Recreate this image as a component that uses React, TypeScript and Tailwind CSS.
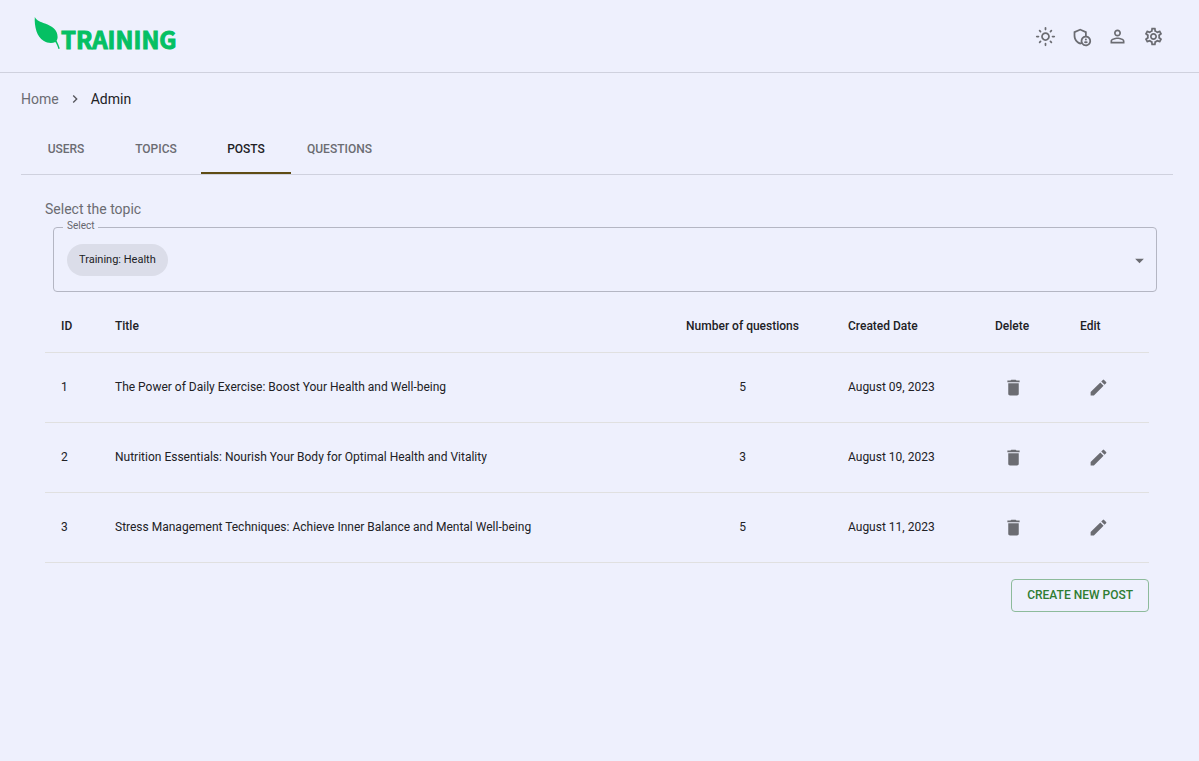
import { useRef, useState } from "react";
import {
  MdArrowDropDown,
  MdDelete,
  MdEdit,
  MdNavigateNext,
  MdOutlineAdminPanelSettings,
  MdOutlineLightMode,
  MdOutlineSettings,
  MdPersonOutline,
} from "react-icons/md";

const tabs = ["Users", "Topics", "Posts", "Questions"];

const topics = ["Training: Health"];

const posts = [
  { id: 1, title: "The Power of Daily Exercise: Boost Your Health and Well-being", questions: 5, created: "August 09, 2023" },
  { id: 2, title: "Nutrition Essentials: Nourish Your Body for Optimal Health and Vitality", questions: 3, created: "August 10, 2023" },
  { id: 3, title: "Stress Management Techniques: Achieve Inner Balance and Mental Well-being", questions: 5, created: "August 11, 2023" },
];

const actions = [
  { label: "Toggle theme", Icon: MdOutlineLightMode },
  { label: "Admin panel", Icon: MdOutlineAdminPanelSettings },
  { label: "Profile", Icon: MdPersonOutline },
  { label: "Settings", Icon: MdOutlineSettings },
];

function Logo() {
  return (
    <a href="#" className="flex items-start text-[#05c063]">
      <svg viewBox="0 0 27 34" className="h-[34px] w-[27px]" fill="currentColor" aria-hidden="true">
        <path d="M.8 0C2.500 3.500 6.500 5 11 6.500C18 9 23.800 13 23.600 20C23.600 21.700 23 22.900 22.600 23.800C24 26.500 25 29 25.800 31.600L24.400 32C23.700 29.300 22.700 27 21.300 25C18.500 26.400 13.500 26.400 9.500 23.800C3 19.800 .2 10 .8 0Z" />
      </svg>
      <span className="pt-1.5 font-['Noto_Sans_CJK_SC',sans-serif] text-[24px] leading-8 font-bold [-webkit-text-stroke:1px_#05c063]">TRAINING</span>
    </a>
  );
}

function Header() {
  return (
    <header className="flex h-[73px] items-center justify-between border-b border-[#cfd1de] pr-[35px] pl-[34px]">
      <Logo />
      <nav aria-label="Account" className="flex gap-[15px]">
        {actions.map(({ label, Icon }) => (
          <button key={label} type="button" aria-label={label} className="flex text-[#6b6c72]">
            <Icon size={21} />
          </button>
        ))}
      </nav>
    </header>
  );
}

function TopicSelect() {
  const ref = useRef<HTMLSelectElement>(null);
  return (
    <fieldset className="-mr-2 ml-2 rounded border border-[#b4b6c3] pr-1.5 pl-[9px]">
      <legend className="px-1 pb-0.5 text-[10px] leading-[14px] text-[#66676d]">
        <label htmlFor="topic">Select</label>
      </legend>
      <div className="flex h-14 items-center justify-between pb-1.5 pl-1">
        <select
          id="topic"
          ref={ref}
          className="field-sizing-content h-8 appearance-none rounded-full bg-[#dbdde9] px-3 text-[11px] text-[#212125]"
        >
          {topics.map((topic) => (
            <option key={topic}>{topic}</option>
          ))}
        </select>
        <button type="button" aria-label="Open topic list" onClick={() => ref.current?.showPicker()} className="text-[#6b6c72]">
          <MdArrowDropDown size={21} />
        </button>
      </div>
    </fieldset>
  );
}

function PostsTable() {
  return (
    <table className="w-full table-fixed text-left text-[12px] leading-4">
      <thead>
        <tr className="h-[52px] border-b border-[#e0e0e0]">
          <th className="w-[54px] px-4 font-medium">ID</th>
          <th className="px-4 font-medium">Title</th>
          <th className="w-[179px] px-4 text-center font-medium">Number of questions</th>
          <th className="w-[147px] px-4 font-medium">Created Date</th>
          <th className="w-[85px] px-4 font-medium">Delete</th>
          <th className="w-[85px] px-4 font-medium">Edit</th>
        </tr>
      </thead>
      <tbody>
        {posts.map((post) => (
          <tr key={post.id} className="h-[70px] border-b border-[#e0e0e0]">
            <td className="px-4">{post.id}</td>
            <td className="px-4">{post.title}</td>
            <td className="px-4 text-center">{post.questions}</td>
            <td className="px-4">{post.created}</td>
            <td className="px-4">
              <button type="button" aria-label={`Delete post ${post.id}`} className="flex p-2 text-[#6b6c72]">
                <MdDelete size={21} />
              </button>
            </td>
            <td className="px-4">
              <button type="button" aria-label={`Edit post ${post.id}`} className="flex p-2 text-[#6b6c72]">
                <MdEdit size={21} />
              </button>
            </td>
          </tr>
        ))}
      </tbody>
    </table>
  );
}

export default function App() {
  const [active, setActive] = useState("Posts");
  return (
    <div className="min-h-screen bg-[#eef0fd] font-[Roboto,sans-serif] text-[#212125]">
      <Header />
      <main className="pt-4 pr-[26px] pl-[21px]">
        <nav aria-label="Breadcrumb" className="flex items-center text-[14px] leading-5">
          <a href="#" className="text-[#6b6c72]">Home</a>
          <MdNavigateNext size={16} className="mx-2 text-[#55565c]" />
          <span aria-current="page">Admin</span>
        </nav>
        <div role="tablist" className="mt-4 flex border-b border-[#cfd1de]">
          {tabs.map((tab) => (
            <button
              key={tab}
              type="button"
              role="tab"
              aria-selected={tab === active}
              onClick={() => setActive(tab)}
              className={
                tab === active
                  ? "h-[49px] min-w-[90px] border-b-2 border-[#5f4c14] px-4 text-[12px] font-medium uppercase"
                  : "h-[49px] min-w-[90px] border-b-2 border-transparent px-4 text-[12px] font-medium text-[#6b6c72] uppercase"
              }
            >
              {tab}
            </button>
          ))}
        </div>
        <section className="px-6 pt-6">
          <p className="text-[14px] leading-5 text-[#6b6c72]">Select the topic</p>
          <TopicSelect />
          <div className="pt-2">
            <PostsTable />
          </div>
          <div className="flex justify-end pt-4">
            <button
              type="button"
              className="h-[33px] rounded border border-[#8dbb9b] px-[15px] text-[12px] font-medium text-[#2e7d32] uppercase"
            >
              Create new post
            </button>
          </div>
        </section>
      </main>
    </div>
  );
}
